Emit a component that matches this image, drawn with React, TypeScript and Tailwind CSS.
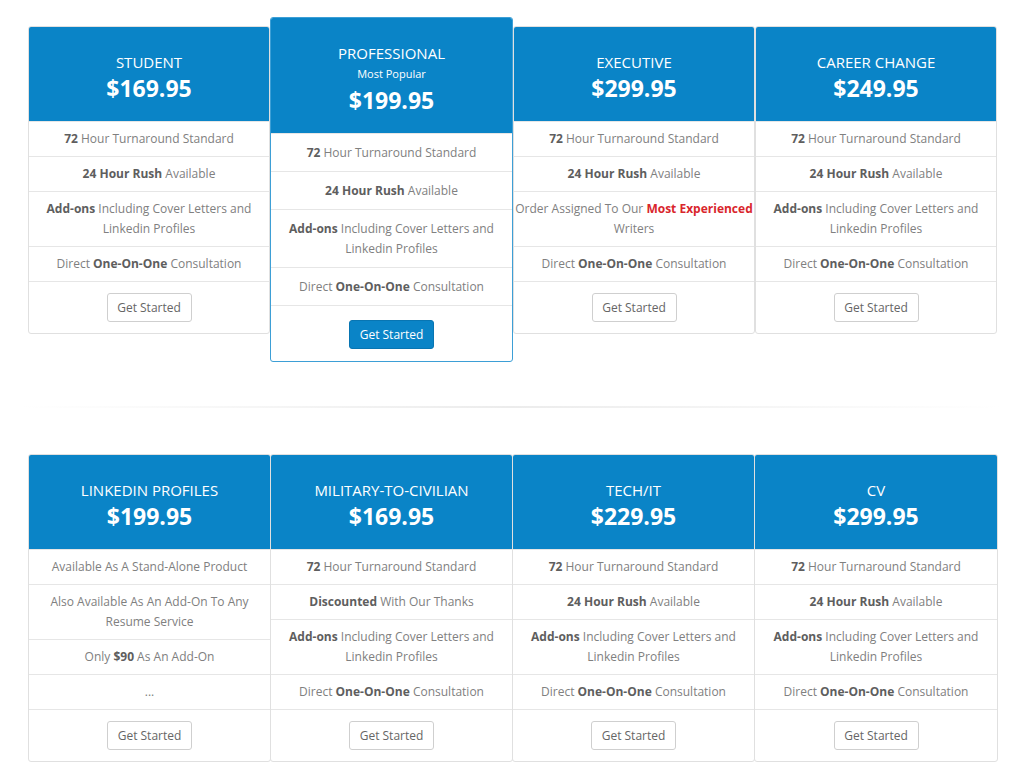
import React from "react";

type Plan = { title: string; price: string; rows: React.ReactNode[]; featured?: boolean; width: string };

const B = ({ children }: { children: React.ReactNode }) => (
  <span className="font-bold text-[#5e5e5e]">{children}</span>
);

const standardRows = (): React.ReactNode[] => [
  <><B>72</B> Hour Turnaround Standard</>,
  <><B>24 Hour Rush</B> Available</>,
  <><B>Add-ons</B> Including Cover Letters and Linkedin Profiles</>,
  <>Direct <B>One-On-One</B> Consultation</>,
];

const topPlans: Plan[] = [
  { title: "STUDENT", price: "$169.95", rows: standardRows(), width: "w-[242px]" },
  { title: "PROFESSIONAL", price: "$199.95", rows: standardRows(), featured: true, width: "w-[243px]" },
  {
    title: "EXECUTIVE",
    price: "$299.95",
    width: "w-[242px]",
    rows: [
      <><B>72</B> Hour Turnaround Standard</>,
      <><B>24 Hour Rush</B> Available</>,
      <>Order Assigned To Our <span className="font-bold text-[#d9262c]">Most Experienced</span> Writers</>,
      <>Direct <B>One-On-One</B> Consultation</>,
    ],
  },
  { title: "CAREER CHANGE", price: "$249.95", rows: standardRows(), width: "w-[242px]" },
];

const bottomPlans: Plan[] = [
  {
    title: "LINKEDIN PROFILES",
    price: "$199.95",
    width: "w-[243px]",
    rows: [
      <>Available As A Stand-Alone Product</>,
      <>Also Available As An Add-On To Any Resume Service</>,
      <>Only <B>$90</B> As An Add-On</>,
      <>...</>,
    ],
  },
  {
    title: "MILITARY-TO-CIVILIAN",
    price: "$169.95",
    width: "w-[243px]",
    rows: [
      <><B>72</B> Hour Turnaround Standard</>,
      <><B>Discounted</B> With Our Thanks</>,
      <><B>Add-ons</B> Including Cover Letters and Linkedin Profiles</>,
      <>Direct <B>One-On-One</B> Consultation</>,
    ],
  },
  { title: "TECH/IT", price: "$229.95", rows: standardRows(), width: "w-[243px]" },
  { title: "CV", price: "$299.95", rows: standardRows(), width: "w-[244px]" },
];

function Card({ plan, offset }: { plan: Plan; offset: boolean }) {
  const f = plan.featured;
  return (
    <div
      className={
        plan.width +
        " shrink-0 bg-white rounded-[3px] overflow-hidden border " +
        (f ? "border-[#3d9fd6] relative z-10" : "border-[#e0e0e0] ") +
        (offset && !f ? "mt-[9px]" : "")
      }
    >
      <div className="bg-[#0a84c7] text-white text-center pt-[24px] pb-[18px]">
        <div className="text-[15px] leading-[22px]">{plan.title}</div>
        {f && <div className="text-[11px] leading-[16px] mt-[2px]">Most Popular</div>}
        <div className={"text-[23px] leading-[30px] font-bold " + (f ? "mt-[3px]" : "")}>{plan.price}</div>
      </div>
      {plan.rows.map((r, i) => (
        <div
          key={i}
          className={
            "border-t border-[#e6e6e6] text-center text-[12px] leading-[20px] text-[#808080] " +
            (f ? "py-[8.5px] px-[14px]" : "py-[7px] px-0")
          }
        >
          {r}
        </div>
      ))}
      <div className={"border-t border-[#e6e6e6] flex justify-center " + (f ? "pt-[14px] pb-[12px]" : "pt-[11px] pb-[11px]")}>
        {f ? (
          <button className="w-[85px] h-[29px] rounded-[3px] bg-[#0a84c7] border border-[#0875b2] text-white text-[12px]">
            Get Started
          </button>
        ) : (
          <button className="w-[85px] h-[29px] rounded-[3px] bg-white border border-[#cfcfcf] text-[#666] text-[12px]">
            Get Started
          </button>
        )}
      </div>
    </div>
  );
}

export default function App() {
  return (
    <div className="w-[1024px] min-h-[773px] bg-white font-['Open_Sans',sans-serif] pt-[17px] pl-[28px]">
      <div className="flex items-start">
        {topPlans.map((p) => (
          <Card key={p.title} plan={p} offset={true} />
        ))}
      </div>
      <div className="ml-[-8px] mt-[44px] w-[980px] h-[2px] bg-gradient-to-r from-transparent via-[#ececec] to-transparent" />
      <div className="flex items-stretch mt-[46px]">
        {bottomPlans.map((p) => (
          <div key={p.title} className="-mr-px flex">
            <Card plan={p} offset={false} />
          </div>
        ))}
      </div>
    </div>
  );
}
